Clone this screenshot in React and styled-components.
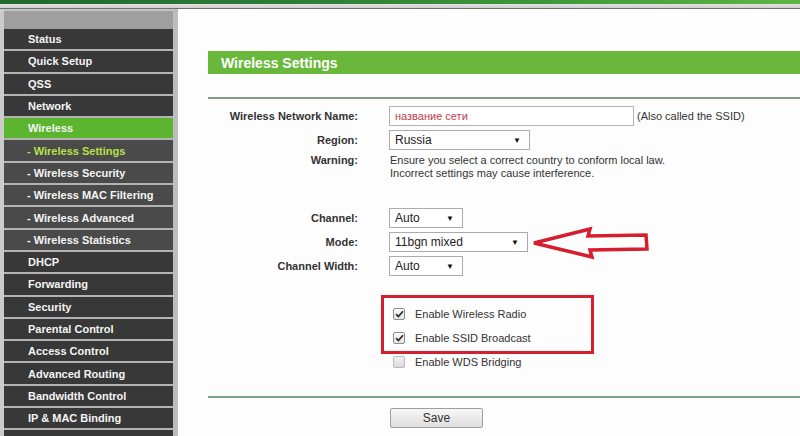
import React from "react";
import styled, { createGlobalStyle } from "styled-components";

const Global = createGlobalStyle`
  html, body { margin: 0; padding: 0; background: #fdfdfd; overflow: hidden; }
  body { font-family: "Liberation Sans", Arial, sans-serif; }
  * { box-sizing: border-box; }
`;

const Page = styled.div`
  position: relative;
  width: 800px;
  height: 436px;
  overflow: hidden;
  background: #fdfdfd;
`;

const TopBar = styled.div`
  height: 9px;
  background:
    linear-gradient(90deg, #1f6a2c 0%, #2f7f35 40%, #3f9a3a 70%, #5fb544 100%) top / 100% 4px no-repeat,
    linear-gradient(#e2e2e2, #cfcfcf) 0 4px / 100% 4px no-repeat,
    #6f6f6f;
`;

const Body = styled.div`
  display: flex;
  height: 427px;
  overflow: hidden;
`;

const Sidebar = styled.nav`
  width: 178px;
  flex: none;
  border-left: 4px solid #cbcbcb;
  border-right: 5px solid #bdbdbd;
  background: #acacac;
  display: flex;
  flex-direction: column;
  overflow: hidden;
`;

const SideHead = styled.div`
  height: 20px;
  flex: none;
  background: linear-gradient(#c4c4c4 0, #c4c4c4 2px, #9f9f9f 2px);
`;

const NavList = styled.ul`
  list-style: none;
  margin: 0;
  padding: 0;
  flex: none;
  display: flex;
  flex-direction: column;
  gap: 2px;
  background: #b3b3b3;
`;

const NavItem = styled.li`
  height: 20.3px;
  flex: none;
  display: flex;
  align-items: center;
  padding-left: ${(p) => (p.$sub ? "23px" : "24px")};
  font-size: 11px;
  font-weight: bold;
  white-space: nowrap;
  color: ${(p) => (p.$current ? "#b4e247" : "#f4f4f4")};
  background: ${(p) => (p.$active ? "#5cb52e" : p.$sub ? "#4a4a4a" : "#383838")};
`;

const Main = styled.main`
  flex: 1;
  padding-left: 30px;
  display: flex;
  flex-direction: column;
  background: #fdfdfd;
`;

const TitleBar = styled.div`
  margin-top: 42px;
  height: 23px;
  flex: none;
  background: #69b83b;
  color: #fff;
  font-size: 14px;
  font-weight: bold;
  display: flex;
  align-items: center;
  padding-left: 13px;
`;

const Rule = styled.div`
  margin-top: ${(p) => p.$top}px;
  height: 2px;
  background: #7f9f8c;
  flex: none;
`;

const Form = styled.div`
  margin-top: 5px;
  display: flex;
  flex-direction: column;
  flex: none;
`;

const Row = styled.div`
  display: flex;
  align-items: ${(p) => (p.$top ? "flex-start" : "center")};
  height: ${(p) => p.$h || 24}px;
  padding-top: ${(p) => (p.$top ? 2 : 0)}px;
  margin-top: ${(p) => p.$mt || 0}px;
`;

const Label = styled.div`
  width: 150px;
  flex: none;
  text-align: right;
  font-size: 11px;
  font-weight: bold;
  color: #333;
  line-height: 13px;
`;

const Value = styled.div`
  margin-left: 31px;
  display: flex;
  align-items: center;
  font-size: 11px;
  color: #333;
`;

const Note = styled.div`
  font-size: 11px;
  color: #333;
  line-height: 13px;
  padding-left: 1px;
`;

const TextInput = styled.div`
  width: 245px;
  height: 20px;
  border: 1px solid #b4b4b4;
  background: #fff;
  color: #c5394a;
  font-size: 11px;
  display: flex;
  align-items: center;
  padding-left: 5px;
`;

const Hint = styled.span`
  margin-left: 3px;
  font-size: 11px;
  color: #333;
`;

const Select = styled.div`
  width: ${(p) => p.$w}px;
  height: 20px;
  border: 1px solid #ababab;
  background: #fff;
  display: flex;
  align-items: center;
  justify-content: space-between;
  padding: 0 8px 0 5px;
  font-size: 12px;
  color: #222;
`;

const Caret = styled.span`
  font-size: 8px;
  color: #111;
`;

const CheckRow = styled.div`
  display: flex;
  align-items: center;
  height: 24px;
  margin-left: 185px;
  font-size: 11px;
  color: #333;
`;

const Box = styled.span`
  width: 12px;
  height: 12px;
  border: 1px solid ${(p) => (p.$on ? "#8c8c8c" : "#b9b9b9")};
  border-radius: 2px;
  background: ${(p) => (p.$on ? "linear-gradient(#fafafa, #e4e4e4)" : "linear-gradient(#f2f2f2, #dadada)")};
  display: inline-flex;
  align-items: center;
  justify-content: center;
  margin-right: 10px;
`;

const ButtonRow = styled.div`
  margin-top: 10px;
  padding-left: 182px;
`;

const SaveButton = styled.div`
  width: 93px;
  height: 20px;
  border: 1px solid #9e9e9e;
  border-radius: 2px;
  background: linear-gradient(#f7f7f7, #dedede);
  font-size: 12px;
  color: #333;
  display: flex;
  align-items: center;
  justify-content: center;
`;

const RedBox = styled.div`
  position: absolute;
  left: 381px;
  top: 295px;
  width: 213px;
  height: 59px;
  border: 3.5px solid #d41f2f;
  pointer-events: none;
`;

const ArrowSvg = styled.svg`
  position: absolute;
  left: 525px;
  top: 222px;
  pointer-events: none;
`;

const Check = ({ on }) => (
  <Box $on={on}>
    {on && (
      <svg width="9" height="8" viewBox="0 0 9 8">
        <path d="M1 4.2 L3.4 6.6 L8 1.2" fill="none" stroke="#2b2b2b" strokeWidth="1.7" />
      </svg>
    )}
  </Box>
);

const nav = [
  { t: "Status" },
  { t: "Quick Setup" },
  { t: "QSS" },
  { t: "Network" },
  { t: "Wireless", active: true },
  { t: "- Wireless Settings", sub: true, current: true },
  { t: "- Wireless Security", sub: true },
  { t: "- Wireless MAC Filtering", sub: true },
  { t: "- Wireless Advanced", sub: true },
  { t: "- Wireless Statistics", sub: true },
  { t: "DHCP" },
  { t: "Forwarding" },
  { t: "Security" },
  { t: "Parental Control" },
  { t: "Access Control" },
  { t: "Advanced Routing" },
  { t: "Bandwidth Control" },
  { t: "IP & MAC Binding" },
  { t: "" },
];

export default function App() {
  return (
    <Page>
      <Global />
      <TopBar />
      <Body>
        <Sidebar>
          <SideHead />
          <NavList>
            {nav.map((n, i) => (
              <NavItem key={i} $sub={n.sub} $active={n.active} $current={n.current}>
                {n.t}
              </NavItem>
            ))}
          </NavList>
        </Sidebar>
        <Main>
          <TitleBar>Wireless Settings</TitleBar>
          <Rule $top={23} />
          <Form>
            <Row>
              <Label>Wireless Network Name:</Label>
              <Value>
                <TextInput>название сети</TextInput>
                <Hint>(Also called the SSID)</Hint>
              </Value>
            </Row>
            <Row>
              <Label>Region:</Label>
              <Value>
                <Select $w={141}>
                  Russia<Caret>▼</Caret>
                </Select>
              </Value>
            </Row>
            <Row $top $h={28}>
              <Label>Warning:</Label>
              <Value>
                <Note>
                  Ensure you select a correct country to conform local law.
                  <br />
                  Incorrect settings may cause interference.
                </Note>
              </Value>
            </Row>
            <Row $mt={26}>
              <Label>Channel:</Label>
              <Value>
                <Select $w={74}>
                  Auto<Caret>▼</Caret>
                </Select>
              </Value>
            </Row>
            <Row>
              <Label>Mode:</Label>
              <Value>
                <Select $w={139}>
                  11bgn mixed<Caret>▼</Caret>
                </Select>
              </Value>
            </Row>
            <Row>
              <Label>Channel Width:</Label>
              <Value>
                <Select $w={74}>
                  Auto<Caret>▼</Caret>
                </Select>
              </Value>
            </Row>
            <Row $h={24} />
            <CheckRow>
              <Check on />
              Enable Wireless Radio
            </CheckRow>
            <CheckRow>
              <Check on />
              Enable SSID Broadcast
            </CheckRow>
            <CheckRow>
              <Check />
              Enable WDS Bridging
            </CheckRow>
          </Form>
          <Rule $top={22} />
          <ButtonRow>
            <SaveButton>Save</SaveButton>
          </ButtonRow>
        </Main>
      </Body>
      <RedBox />
      <ArrowSvg width="130" height="45" viewBox="525 222 130 45">
        <polygon
          points="534,243 590,229 588,236 646,235 647,249 590,250 592,257"
          fill="none"
          stroke="#d41f2f"
          strokeWidth="3.5"
          strokeLinejoin="miter"
        />
      </ArrowSvg>
    </Page>
  );
}
